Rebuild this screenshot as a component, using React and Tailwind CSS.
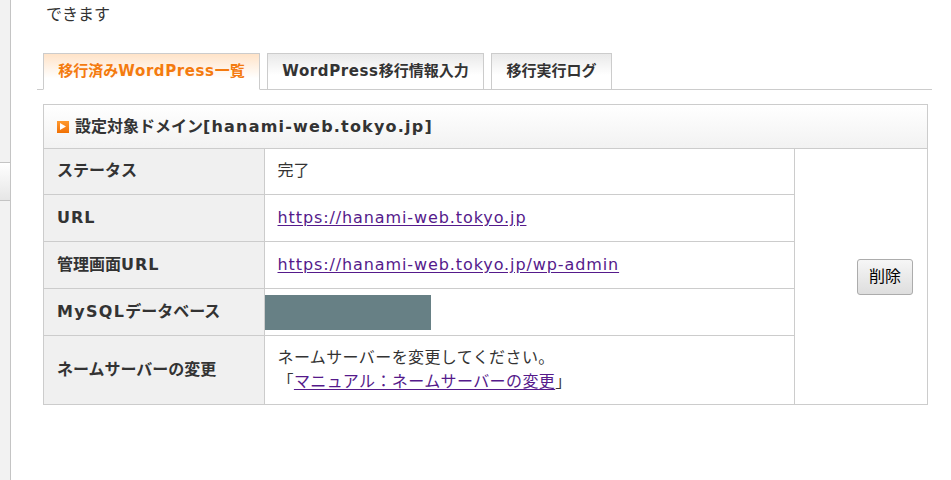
const FONT = { fontFamily: '"DejaVu Sans", "Noto Sans CJK JP", sans-serif' };

const Link = ({ children }) => (
  <a href="#" className="tracking-[0.9px] text-[#551a8b] underline underline-offset-2">
    {children}
  </a>
);

const rows = [
  { label: 'ステータス', value: <span>完了</span>, h: 'h-[45px]' },
  { label: <span className="tracking-[1px]">URL</span>, value: <Link>https://hanami-web.tokyo.jp</Link>, h: 'h-[47px]' },
  {
    label: (
      <>
        管理画面<span className="tracking-[1px]">URL</span>
      </>
    ),
    value: <Link>https://hanami-web.tokyo.jp/wp-admin</Link>,
    h: 'h-[47px]',
  },
];

const Tab = ({ active, children, width }) => (
  <div
    className={`-mb-px flex h-[37px] items-center justify-center border border-[#cccccc] text-[15px] font-bold ${
      active
        ? 'border-b-white bg-gradient-to-b from-[#ffe3c8] to-white to-70% text-[#f47b0f]'
        : 'bg-gradient-to-b from-[#e9e9e9] to-white to-60% text-[#333333]'
    } ${width}`}
  >
    {children}
  </div>
);

export default function App() {
  return (
    <div className="flex min-h-[480px] w-[951px] bg-white text-[#333333]" style={FONT}>
      {/* left strip */}
      <div className="w-[11px] shrink-0 border-r border-[#c4c4c4] bg-[#f2f2f2] pt-[162px]">
        <div className="h-[39px] border-y border-[#c4c4c4] bg-gradient-to-b from-white to-[#e6e6e6]" />
      </div>

      <div className="flex-1 pl-[26px]">
        <p className="ml-[9px] pt-[3px] text-[16px] leading-6">できます</p>

        {/* tabs */}
        <div className="mt-[26px] flex w-[895px] gap-[7px] border-b border-[#cccccc] pl-[6px]">
          <Tab active width="w-[217px]">
            移行済み<span className="tracking-[0.6px]">WordPress</span>一覧
          </Tab>
          <Tab width="w-[217px]">
            <span className="tracking-[0.6px]">WordPress</span>移行情報入力
          </Tab>
          <Tab width="w-[121px]">移行実行ログ</Tab>
        </div>

        {/* panel */}
        <div className="ml-[6px] mt-[14px] w-[885px] border border-[#cccccc]">
          <div className="flex h-[44px] items-center gap-[6px] border-b border-[#cccccc] bg-gradient-to-b from-white to-[#f2f2f2] pl-[13px] text-[16px] font-bold">
            <span className="flex h-[12px] w-[12px] items-center justify-center bg-gradient-to-b from-[#ff9a2e] to-[#f07000]">
              <svg width="6" height="7" viewBox="0 0 6 7">
                <path d="M0 0 L6 3.5 L0 7 Z" fill="#fff" />
              </svg>
            </span>
            <span>
              設定対象ドメイン<span className="tracking-[1.2px]">[hanami-web.tokyo.jp]</span>
            </span>
          </div>

          <table className="w-full border-collapse text-[16px]">
            <tbody>
              {rows.map((r, i) => (
                <tr key={i} className={`${r.h} border-b border-[#cccccc]`}>
                  <th className="w-[220px] border-r border-[#cccccc] bg-[#f0f0f0] pl-[13px] text-left font-bold">
                    {r.label}
                  </th>
                  <td className="pl-[13px]">{r.value}</td>
                  {i === 0 && (
                    <td rowSpan={5} className="w-[133px] border-l border-[#cccccc] pr-[14px] text-right align-middle">
                      <button className="h-[36px] w-[56px] rounded-[3px] border border-[#acacac] bg-gradient-to-b from-[#f6f6f6] to-[#dedede] text-[16px] text-black">
                        削除
                      </button>
                    </td>
                  )}
                </tr>
              ))}
              <tr className="h-[47px] border-b border-[#cccccc]">
                <th className="border-r border-[#cccccc] bg-[#f0f0f0] pl-[13px] text-left font-bold">
                  <span className="tracking-[1.3px]">MySQL</span>データベース
                </th>
                <td className="align-top">
                  <div className="mt-[6px] h-[35px] w-[166px] bg-[#678085]" />
                </td>
              </tr>
              <tr className="h-[69px]">
                <th className="border-r border-[#cccccc] bg-[#f0f0f0] pl-[13px] text-left font-bold">
                  ネームサーバーの変更
                </th>
                <td className="pl-[13px] leading-6 tracking-[0.4px]">
                  ネームサーバーを変更してください。
                  <br />
                  「<a href="#" className="text-[#551a8b] underline underline-offset-2">マニュアル：ネームサーバーの変更</a>」
                </td>
              </tr>
            </tbody>
          </table>
        </div>
      </div>
    </div>
  );
}
